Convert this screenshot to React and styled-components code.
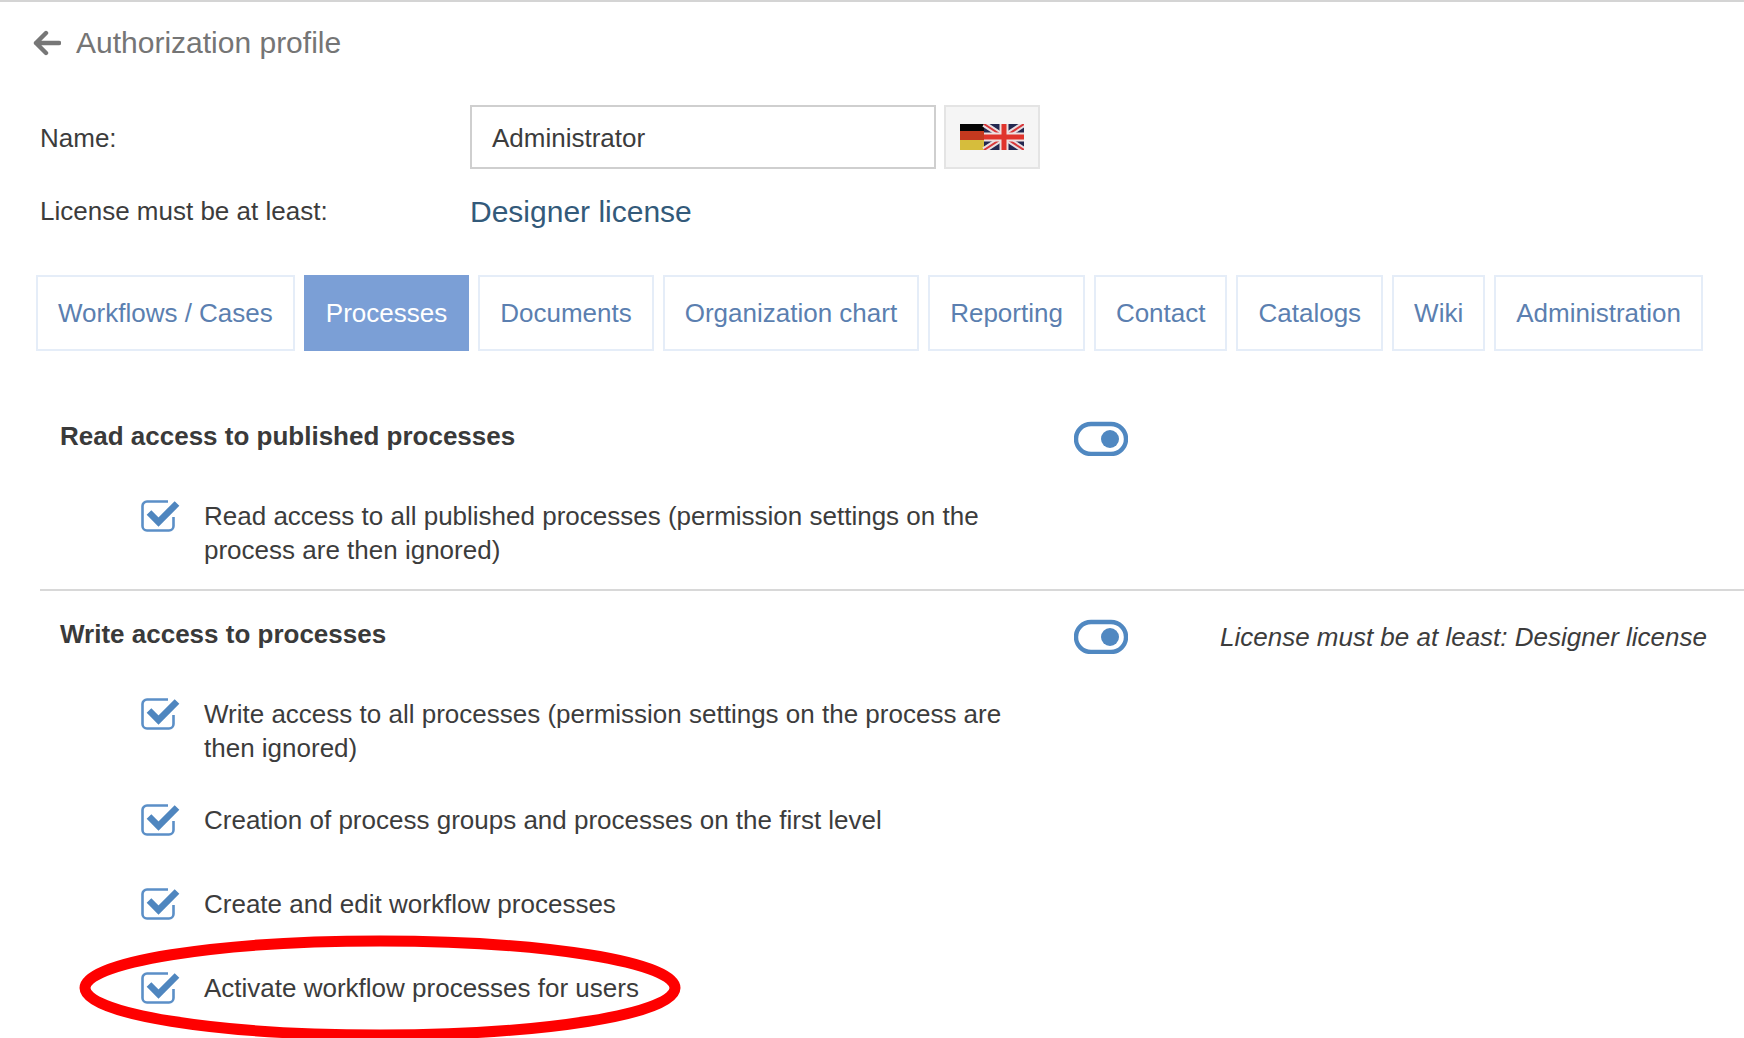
import React from "react";
import styled, { createGlobalStyle } from "styled-components";

const Global = createGlobalStyle`
  html, body { margin: 0; padding: 0; background: #fff; }
  body { font-family: "Liberation Sans", Arial, sans-serif; color: #3c3c3c; }
  * { box-sizing: border-box; }
`;

const Page = styled.div`
  position: relative;
  width: 1744px;
  height: 1038px;
  overflow: hidden;
  border-top: 2px solid #d4d4d4;
`;

const TitleBar = styled.header`
  display: flex;
  align-items: center;
  gap: 15px;
  height: 82px;
  padding-left: 33px;
  font-size: 30px;
  color: #757575;
`;

const FormRow = styled.div`
  display: flex;
  align-items: center;
  padding-left: 40px;
  height: ${(p) => p.$h}px;
  margin-top: ${(p) => p.$top || 0}px;
  font-size: 26px;
`;

const Label = styled.div`
  width: 430px;
  flex: none;
`;

const NameInput = styled.div`
  width: 466px;
  height: 64px;
  margin-top: -3px;
  border: 2px solid #cfcfcf;
  padding: 3px 0 0 20px;
  display: flex;
  align-items: center;
`;

const FlagButton = styled.div`
  width: 96px;
  height: 64px;
  margin: -3px 0 0 8px;
  border: 2px solid #e4e4e4;
  background: #f5f5f5;
  display: flex;
  align-items: center;
  justify-content: center;
`;

const License = styled.div`
  padding-top: 2px;
  font-size: 30px;
  color: #335a7a;
`;

const Tabs = styled.nav`
  display: flex;
  gap: 9px;
  padding-left: 36px;
  margin-top: 34px;
`;

const Tab = styled.div`
  height: 76px;
  display: flex;
  align-items: center;
  padding: 0 20px;
  font-size: 26px;
  border: 2px solid ${(p) => (p.$active ? "#7b9fd6" : "#e5edf8")};
  background: ${(p) => (p.$active ? "#7b9fd6" : "#fff")};
  color: ${(p) => (p.$active ? "#fff" : "#5b7fb0")};
`;

const Section = styled.section`
  margin-left: 40px;
  padding-left: 20px;
  padding-top: ${(p) => p.$top}px;
  padding-bottom: ${(p) => p.$bottom || 0}px;
  border-bottom: ${(p) => (p.$divider ? "2px solid #d8d8d8" : "none")};
`;

const SectionHead = styled.div`
  display: grid;
  grid-template-columns: 1014px 54px 1fr;
  align-items: center;
  height: 36px;
  padding-right: 37px;
`;

const SectionTitle = styled.h3`
  margin: 0 0 4px;
  font-size: 26px;
  font-weight: 700;
  color: #3a3a3a;
`;

const Note = styled.div`
  padding-top: 3px;
  font-size: 26px;
  font-style: italic;
  text-align: right;
  color: #3c3c3c;
`;

const Items = styled.div`
  display: flex;
  flex-direction: column;
  gap: 38px;
  margin-top: 43px;
  padding-left: 81px;
`;

const Item = styled.div`
  display: flex;
  align-items: flex-start;
  gap: 22px;
  min-height: 46px;
`;

const ItemText = styled.div`
  width: 800px;
  font-size: 26px;
  line-height: 34px;
`;

const BoxIcon = styled.svg`
  flex: none;
  width: 41px;
  height: 36px;
  margin-top: -2px;
`;

const Annotation = styled.svg`
  position: absolute;
  left: 0;
  top: 0;
  pointer-events: none;
`;

const Check = () => (
  <BoxIcon viewBox="0 0 41 36">
    <path
      d="M27 4.5H6a4.5 4.5 0 0 0-4.5 4.5v20a4.5 4.5 0 0 0 4.5 4.5h22a4.5 4.5 0 0 0 4.5-4.5v-9"
      fill="none"
      stroke="#5b8fc7"
      strokeWidth="2.6"
    />
    <path d="M8 15.5l9.5 9.5L36 6.5" fill="none" stroke="#4f86bf" strokeWidth="6.6" />
  </BoxIcon>
);

const Toggle = () => (
  <svg width="54" height="36" viewBox="0 0 54 36">
    <rect x="2" y="4" width="50" height="30" rx="15" fill="#fff" stroke="#5088c1" strokeWidth="4.4" />
    <circle cx="36" cy="19" r="9" fill="#5088c1" />
  </svg>
);

const Flag = () => (
  <svg width="64" height="26" viewBox="0 0 64 26" style={{ filter: "blur(0.7px)" }}>
    <rect x="0" y="0" width="24" height="7" fill="#060606" />
    <rect x="0" y="7" width="24" height="9" fill="#c5391f" />
    <rect x="0" y="16" width="24" height="10" fill="#d6bd3c" />
    <rect x="24" y="0" width="40" height="26" fill="#232850" />
    <path d="M24 0L64 26M64 0L24 26" stroke="#e8dfe2" strokeWidth="6" />
    <path d="M24 0L64 26M64 0L24 26" stroke="#d8383a" strokeWidth="2" />
    <path d="M44 0V26M24 13H64" stroke="#eee0e0" strokeWidth="9" />
    <path d="M44 0V26M24 13H64" stroke="#e0342c" strokeWidth="5" />
  </svg>
);

const tabs = ["Workflows / Cases", "Processes", "Documents", "Organization chart", "Reporting", "Contact", "Catalogs", "Wiki", "Administration"];

export default function App() {
  return (
    <Page>
      <Global />
      <TitleBar>
        <svg width="28" height="26" viewBox="0 0 28 26">
          <path d="M26 13H3M13 3L3 13l10 10" fill="none" stroke="#777" strokeWidth="4.4" strokeLinecap="round" strokeLinejoin="round" />
        </svg>
        Authorization profile
      </TitleBar>
      <FormRow $h={85} $top={12}>
        <Label>Name:</Label>
        <NameInput>Administrator</NameInput>
        <FlagButton><Flag /></FlagButton>
      </FormRow>
      <FormRow $h={60}>
        <Label>License must be at least:</Label>
        <License>Designer license</License>
      </FormRow>
      <Tabs>
        {tabs.map((t) => (
          <Tab key={t} $active={t === "Processes"}>{t}</Tab>
        ))}
      </Tabs>
      <Section $top={69} $bottom={22} $divider>
        <SectionHead>
          <SectionTitle>Read access to published processes</SectionTitle>
          <Toggle />
        </SectionHead>
        <Items>
          <Item>
            <Check />
            <ItemText>Read access to all published processes (permission settings on the process are then ignored)</ItemText>
          </Item>
        </Items>
      </Section>
      <Section $top={27}>
        <SectionHead>
          <SectionTitle>Write access to processes</SectionTitle>
          <Toggle />
          <Note>License must be at least: Designer license</Note>
        </SectionHead>
        <Items>
          <Item>
            <Check />
            <ItemText>Write access to all processes (permission settings on the process are then ignored)</ItemText>
          </Item>
          <Item>
            <Check />
            <ItemText>Creation of process groups and processes on the first level</ItemText>
          </Item>
          <Item>
            <Check />
            <ItemText>Create and edit workflow processes</ItemText>
          </Item>
          <Item>
            <Check />
            <ItemText>Activate workflow processes for users</ItemText>
          </Item>
        </Items>
      </Section>
      <Annotation width="1744" height="1038" viewBox="0 0 1744 1038">
        <ellipse cx="380" cy="986" rx="295" ry="47" fill="none" stroke="#fe0000" strokeWidth="11" />
      </Annotation>
    </Page>
  );
}
